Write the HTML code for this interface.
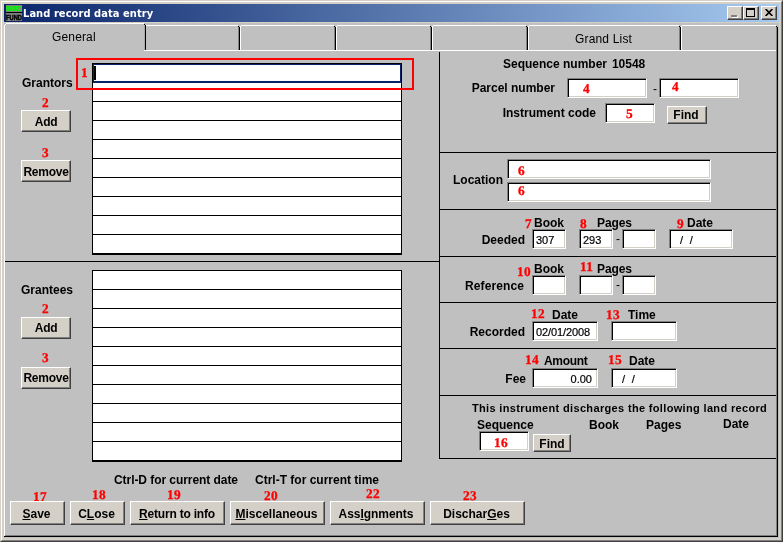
<!DOCTYPE html>
<html><head><meta charset="utf-8"><title>Land record data entry</title>
<style>
html,body{margin:0;padding:0;}
body{width:783px;height:542px;position:relative;overflow:hidden;background:#d4d0c8;font-family:"Liberation Sans",Arial,sans-serif;font-size:12px;color:#000;}
.a{position:absolute;white-space:nowrap;}
.b{font-weight:bold;}
.l{position:absolute;white-space:nowrap;font-weight:bold;font-size:12px;line-height:14px;height:14px;}
.r{text-align:right;}
.n{position:absolute;white-space:nowrap;font-family:"Liberation Serif","Times New Roman",serif;font-weight:bold;font-size:13.3px;letter-spacing:0.3px;-webkit-text-stroke:0.3px #f00;text-rendering:geometricPrecision;line-height:14px;height:14px;color:#f00;}
.f{position:absolute;background:#fff;box-sizing:border-box;border:1px solid;border-color:#808080 #fff #fff #808080;box-shadow:inset 1px 1px 0 #000, inset -1px -1px 0 #d4d0c8;font-size:11px;line-height:21px;padding-left:3px;-webkit-text-stroke:0.2px #000;white-space:nowrap;overflow:hidden;}
.btn{position:absolute;box-sizing:border-box;background:#d4d0c8;border:1px solid;border-color:#fff #404040 #404040 #fff;box-shadow:inset -1px -1px 0 #808080;font-weight:bold;font-size:12px;text-align:center;white-space:nowrap;}
.hl{position:absolute;height:1px;background:#000;}
.vl{position:absolute;width:1px;background:#000;}
u{text-decoration:underline;}
</style></head><body><div id="wrap" style="position:absolute;left:0;top:0;width:783px;height:542px;will-change:transform;">
<!-- window frame -->
<div class="a" style="left:0;top:0;width:783px;height:542px;box-sizing:border-box;border:1px solid;border-color:#d4d0c8 #404040 #404040 #d4d0c8;"></div>
<div class="a" style="left:1px;top:1px;width:781px;height:540px;box-sizing:border-box;border:1px solid;border-color:#fff #808080 #808080 #fff;"></div>
<!-- title bar -->
<div class="a" id="title" style="left:4px;top:4px;width:775px;height:18px;background:linear-gradient(to right,#0a246a,#a6caf0);"></div>
<svg class="a" style="left:6px;top:5px" width="16" height="16" viewBox="0 0 16 16"><rect width="16" height="16" fill="#808080"/><rect x="0" y="1" width="16" height="5" fill="#7a8a7a"/><text x="0" y="6" font-family="Liberation Sans,sans-serif" font-weight="bold" font-size="7" fill="#00ff00" stroke="#00ff00" stroke-width="0.15" textLength="16" lengthAdjust="spacingAndGlyphs">NEMRC</text><rect x="0" y="7" width="16" height="1" fill="#000"/><text x="0" y="15" font-family="Liberation Sans,sans-serif" font-weight="bold" font-size="7" fill="#000" stroke="#000" stroke-width="0.4" textLength="16" lengthAdjust="spacingAndGlyphs">FUND</text></svg>
<div class="a" id="ttext" style="left:23px;top:7px;letter-spacing:0.07px;font-family:'DejaVu Sans Condensed','DejaVu Sans',sans-serif;font-weight:bold;font-size:11px;line-height:14px;color:#fff;">Land record data entry</div>
<!-- caption buttons -->
<div class="btn" style="left:727px;top:6px;width:16px;height:14px;"><div class="a" style="left:4px;top:9px;width:6px;height:2px;background:#fff"></div><div class="a" style="left:3px;top:8px;width:6px;height:2px;background:#808080"></div></div>
<div class="btn" style="left:743px;top:6px;width:16px;height:14px;"><div class="a" style="left:2px;top:1px;width:9px;height:9px;box-sizing:border-box;border:1px solid #000;border-top-width:2px"></div></div>
<div class="btn" style="left:761px;top:6px;width:16px;height:14px;"><svg class="a" style="left:3px;top:2px" width="8" height="7" viewBox="0 0 8 7"><path d="M0.6 0L7.4 7M7.4 0L0.6 7" stroke="#000" stroke-width="1.7" fill="none"/></svg></div>
<!-- client -->
<div class="a" id="client" style="left:4px;top:23px;width:775px;height:515px;background:#c0c0c0;"></div>
<!-- tab control border -->
<div class="a" style="left:4px;top:25px;width:1px;height:511px;background:#fff;"></div>
<div class="a" style="left:5px;top:24px;width:1px;height:1px;background:#fff;"></div>
<div class="a" style="left:6px;top:23px;width:138px;height:1px;background:#fff;"></div>
<div class="a" style="left:776px;top:27px;width:1px;height:509px;background:#808080;"></div>
<div class="a" style="left:776px;top:26px;width:1px;height:1px;background:#000;"></div>
<div class="a" style="left:777px;top:27px;width:1px;height:510px;background:#000;"></div>
<div class="a" style="left:5px;top:535px;width:772px;height:1px;background:#808080;"></div>
<div class="a" style="left:4px;top:536px;width:774px;height:1px;background:#000;"></div>
<!-- tabs -->
<div class="a" style="left:146px;top:25px;width:630px;height:1px;background:#fff;"></div>
<div class="a" style="left:144px;top:50px;width:632px;height:1px;background:#fff;"></div>
<div class="a" style="left:144px;top:25px;width:1px;height:25px;background:#a8a8a8"></div>
<div class="a" style="left:144px;top:24px;width:1px;height:1px;background:#000"></div>
<div class="a" style="left:145px;top:25px;width:1px;height:25px;background:#000"></div>
<div class="a" style="left:238px;top:25px;width:3px;height:1px;background:#c0c0c0"></div>
<div class="a" style="left:238px;top:27px;width:1px;height:23px;background:#808080"></div>
<div class="a" style="left:238px;top:26px;width:1px;height:1px;background:#000"></div>
<div class="a" style="left:239px;top:27px;width:1px;height:23px;background:#000"></div>
<div class="a" style="left:240px;top:26px;width:1px;height:25px;background:#fff"></div>
<div class="a" style="left:334px;top:25px;width:3px;height:1px;background:#c0c0c0"></div>
<div class="a" style="left:334px;top:27px;width:1px;height:23px;background:#808080"></div>
<div class="a" style="left:334px;top:26px;width:1px;height:1px;background:#000"></div>
<div class="a" style="left:335px;top:27px;width:1px;height:23px;background:#000"></div>
<div class="a" style="left:336px;top:26px;width:1px;height:25px;background:#fff"></div>
<div class="a" style="left:430px;top:25px;width:3px;height:1px;background:#c0c0c0"></div>
<div class="a" style="left:430px;top:27px;width:1px;height:23px;background:#808080"></div>
<div class="a" style="left:430px;top:26px;width:1px;height:1px;background:#000"></div>
<div class="a" style="left:431px;top:27px;width:1px;height:23px;background:#000"></div>
<div class="a" style="left:432px;top:26px;width:1px;height:25px;background:#fff"></div>
<div class="a" style="left:526px;top:25px;width:3px;height:1px;background:#c0c0c0"></div>
<div class="a" style="left:526px;top:27px;width:1px;height:23px;background:#808080"></div>
<div class="a" style="left:526px;top:26px;width:1px;height:1px;background:#000"></div>
<div class="a" style="left:527px;top:27px;width:1px;height:23px;background:#000"></div>
<div class="a" style="left:528px;top:26px;width:1px;height:25px;background:#fff"></div>
<div class="a" style="left:679px;top:25px;width:3px;height:1px;background:#c0c0c0"></div>
<div class="a" style="left:679px;top:27px;width:1px;height:23px;background:#808080"></div>
<div class="a" style="left:679px;top:26px;width:1px;height:1px;background:#000"></div>
<div class="a" style="left:680px;top:27px;width:1px;height:23px;background:#000"></div>
<div class="a" style="left:681px;top:26px;width:1px;height:25px;background:#fff"></div>
<div class="a" style="left:52px;top:30px;font-size:12px;line-height:14px;letter-spacing:0.15px;">General</div>
<div class="a" style="left:575px;top:32px;font-size:12px;line-height:14px;letter-spacing:0.17px;">Grand List</div>

<!-- Grantors -->
<div class="n" style="left:81px;top:66px;">1</div>
<div class="l" style="left:22px;top:76px;">Grantors</div>
<div class="n" style="left:42px;top:96px;">2</div>
<div class="btn" style="left:21px;top:110px;width:50px;height:22px;line-height:23px;letter-spacing:-0.3px;">Add</div>
<div class="n" style="left:42px;top:146px;">3</div>
<div class="btn" style="left:21px;top:160px;width:50px;height:22px;line-height:23px;letter-spacing:-0.25px;">Remove</div>
<div class="a" id="g1" style="left:92px;top:63px;width:310px;height:192px;background:#fff;box-sizing:border-box;border:1px solid #000;border-bottom-width:2px;"><div class="a" style="left:0;top:18px;width:308px;height:1px;background:#000"></div><div class="a" style="left:0;top:37px;width:308px;height:1px;background:#000"></div><div class="a" style="left:0;top:56px;width:308px;height:1px;background:#000"></div><div class="a" style="left:0;top:75px;width:308px;height:1px;background:#000"></div><div class="a" style="left:0;top:94px;width:308px;height:1px;background:#000"></div><div class="a" style="left:0;top:113px;width:308px;height:1px;background:#000"></div><div class="a" style="left:0;top:132px;width:308px;height:1px;background:#000"></div><div class="a" style="left:0;top:151px;width:308px;height:1px;background:#000"></div><div class="a" style="left:0;top:170px;width:308px;height:1px;background:#000"></div></div>
<div class="a" style="left:93px;top:64px;width:308px;height:19px;box-sizing:border-box;border:1px solid #0a246a;border-bottom-width:2px;"></div>
<div class="a" style="left:94px;top:66px;width:2px;height:14px;background:#000;"></div>
<div class="a" style="left:76px;top:58px;width:338px;height:32px;box-sizing:border-box;border:2px solid #f00;"></div>
<div class="hl" style="left:5px;top:261px;width:434px;"></div>
<!-- Grantees -->
<div class="l" style="left:21px;top:283px;">Grantees</div>
<div class="n" style="left:42px;top:302px;">2</div>
<div class="btn" style="left:21px;top:317px;width:50px;height:22px;line-height:21px;letter-spacing:-0.3px;">Add</div>
<div class="n" style="left:42px;top:351px;">3</div>
<div class="btn" style="left:21px;top:367px;width:50px;height:22px;line-height:21px;letter-spacing:-0.25px;">Remove</div>
<div class="a" id="g2" style="left:92px;top:270px;width:310px;height:192px;background:#fff;box-sizing:border-box;border:1px solid #000;border-bottom-width:2px;"><div class="a" style="left:0;top:18px;width:308px;height:1px;background:#000"></div><div class="a" style="left:0;top:37px;width:308px;height:1px;background:#000"></div><div class="a" style="left:0;top:56px;width:308px;height:1px;background:#000"></div><div class="a" style="left:0;top:75px;width:308px;height:1px;background:#000"></div><div class="a" style="left:0;top:94px;width:308px;height:1px;background:#000"></div><div class="a" style="left:0;top:113px;width:308px;height:1px;background:#000"></div><div class="a" style="left:0;top:132px;width:308px;height:1px;background:#000"></div><div class="a" style="left:0;top:151px;width:308px;height:1px;background:#000"></div><div class="a" style="left:0;top:170px;width:308px;height:1px;background:#000"></div></div>

<!-- bottom -->
<div class="l" style="left:114px;top:473px;letter-spacing:-0.06px;">Ctrl-D for current date</div>
<div class="l" style="left:255px;top:473px;">Ctrl-T for current time</div>
<div class="n" style="left:33px;top:490px;">17</div>
<div class="n" style="left:92px;top:488px;">18</div>
<div class="n" style="left:167px;top:488px;">19</div>
<div class="n" style="left:264px;top:489px;">20</div>
<div class="n" style="left:366px;top:487px;">22</div>
<div class="n" style="left:463px;top:489px;">23</div>
<div class="btn" style="left:10px;top:501px;width:55px;height:24px;line-height:24px;padding-right:2px;"><u>S</u>ave</div>
<div class="btn" style="left:70px;top:501px;width:55px;height:24px;line-height:24px;padding-right:2px;">C<u>L</u>ose</div>
<div class="btn" style="left:130px;top:501px;width:95px;height:24px;line-height:24px;letter-spacing:-0.2px;padding-right:1px;"><u>R</u>eturn to info</div>
<div class="btn" style="left:230px;top:501px;width:95px;height:24px;line-height:24px;padding-right:2px;"><u>M</u>iscellaneous</div>
<div class="btn" style="left:330px;top:501px;width:95px;height:24px;line-height:24px;padding-right:3px;letter-spacing:-0.05px;">Ass<u>I</u>gnments</div>
<div class="btn" style="left:430px;top:501px;width:95px;height:24px;line-height:24px;padding-right:2px;">Dischar<u>G</u>es</div>

<!-- right panel -->
<div class="vl" style="left:439px;top:52px;height:407px;"></div>
<div class="hl" style="left:439px;top:152px;width:337px;"></div>
<div class="hl" style="left:439px;top:209px;width:337px;"></div>
<div class="hl" style="left:439px;top:256px;width:337px;"></div>
<div class="hl" style="left:439px;top:302px;width:337px;"></div>
<div class="hl" style="left:439px;top:348px;width:337px;"></div>
<div class="hl" style="left:439px;top:395px;width:337px;"></div>
<div class="hl" style="left:439px;top:458px;width:337px;"></div>

<div class="l" style="left:503px;top:57px;">Sequence number&nbsp;<span style="margin-left:1.5px">10548</span></div>
<div class="l r" style="right:228px;top:81px;">Parcel number</div>
<div class="f" style="left:567px;top:78px;width:80px;height:20px;"></div>
<div class="n" style="left:583px;top:82px;">4</div>
<div class="l" style="left:653px;top:82px;font-weight:normal;">-</div>
<div class="f" style="left:659px;top:78px;width:80px;height:20px;"></div>
<div class="n" style="left:672px;top:80px;">4</div>
<div class="l r" style="right:187px;top:106px;">Instrument code</div>
<div class="f" style="left:605px;top:103px;width:50px;height:20px;"></div>
<div class="n" style="left:626px;top:107px;">5</div>
<div class="btn" style="left:667px;top:106px;width:40px;height:18px;line-height:17px;padding-right:2px;">Find</div>

<div class="l r" style="right:280px;top:173px;">Location</div>
<div class="f" style="left:507px;top:159px;width:204px;height:20px;"></div>
<div class="n" style="left:518px;top:164px;">6</div>
<div class="f" style="left:507px;top:182px;width:204px;height:20px;"></div>
<div class="n" style="left:518px;top:184px;">6</div>

<div class="n" style="left:525px;top:217px;">7</div>
<div class="l" style="left:534px;top:216px;">Book</div>
<div class="n" style="left:580px;top:217px;">8</div>
<div class="l" style="left:597px;top:216px;letter-spacing:-0.1px;">Pages</div>
<div class="n" style="left:677px;top:217px;">9</div>
<div class="l" style="left:687px;top:216px;">Date</div>
<div class="l r" style="right:258px;top:233px;">Deeded</div>
<div class="f" style="left:532px;top:229px;width:34px;height:20px;">307</div>
<div class="f" style="left:579px;top:229px;width:34px;height:20px;">293</div>
<div class="l" style="left:616px;top:232px;font-weight:normal;">-</div>
<div class="f" style="left:622px;top:229px;width:34px;height:20px;"></div>
<div class="f" style="left:669px;top:229px;width:64px;height:20px;padding-left:10px;letter-spacing:0.2px;">/&nbsp; /</div>

<div class="n" style="left:517px;top:265px;">10</div>
<div class="l" style="left:534px;top:262px;">Book</div>
<div class="n" style="left:580px;top:260px;">11</div>
<div class="l" style="left:597px;top:262px;letter-spacing:-0.1px;">Pages</div>
<div class="l r" style="right:259px;top:279px;letter-spacing:0.1px;">Reference</div>
<div class="f" style="left:532px;top:275px;width:34px;height:20px;"></div>
<div class="f" style="left:579px;top:275px;width:34px;height:20px;"></div>
<div class="l" style="left:616px;top:278px;font-weight:normal;">-</div>
<div class="f" style="left:622px;top:275px;width:34px;height:20px;"></div>

<div class="n" style="left:531px;top:307px;">12</div>
<div class="l" style="left:552px;top:308px;">Date</div>
<div class="n" style="left:606px;top:308px;">13</div>
<div class="l" style="left:628px;top:308px;">Time</div>
<div class="l r" style="right:258px;top:325px;">Recorded</div>
<div class="f" style="left:532px;top:321px;width:66px;height:20px;letter-spacing:-0.1px;">02/01/2008</div>
<div class="f" style="left:611px;top:321px;width:66px;height:20px;"></div>

<div class="n" style="left:525px;top:353px;">14</div>
<div class="l" style="left:544px;top:354px;letter-spacing:-0.3px;">Amount</div>
<div class="n" style="left:608px;top:353px;">15</div>
<div class="l" style="left:629px;top:354px;">Date</div>
<div class="l r" style="right:257px;top:372px;">Fee</div>
<div class="f" style="left:532px;top:368px;width:66px;height:20px;text-align:right;padding-right:5px;">0.00</div>
<div class="f" style="left:611px;top:368px;width:66px;height:20px;padding-left:10px;letter-spacing:0.2px;">/&nbsp; /</div>

<div class="l" id="disc" style="left:472px;top:401px;font-size:11px;letter-spacing:0.34px;">This instrument discharges the following land record</div>
<div class="l" style="left:477px;top:418px;">Sequence</div>
<div class="l" style="left:589px;top:418px;">Book</div>
<div class="l" style="left:646px;top:418px;">Pages</div>
<div class="l" style="left:723px;top:417px;">Date</div>
<div class="f" style="left:479px;top:431px;width:50px;height:20px;"></div>
<div class="n" style="left:494px;top:436px;">16</div>
<div class="btn" style="left:533px;top:434px;width:38px;height:18px;line-height:19px;">Find</div>

</div></body></html>
